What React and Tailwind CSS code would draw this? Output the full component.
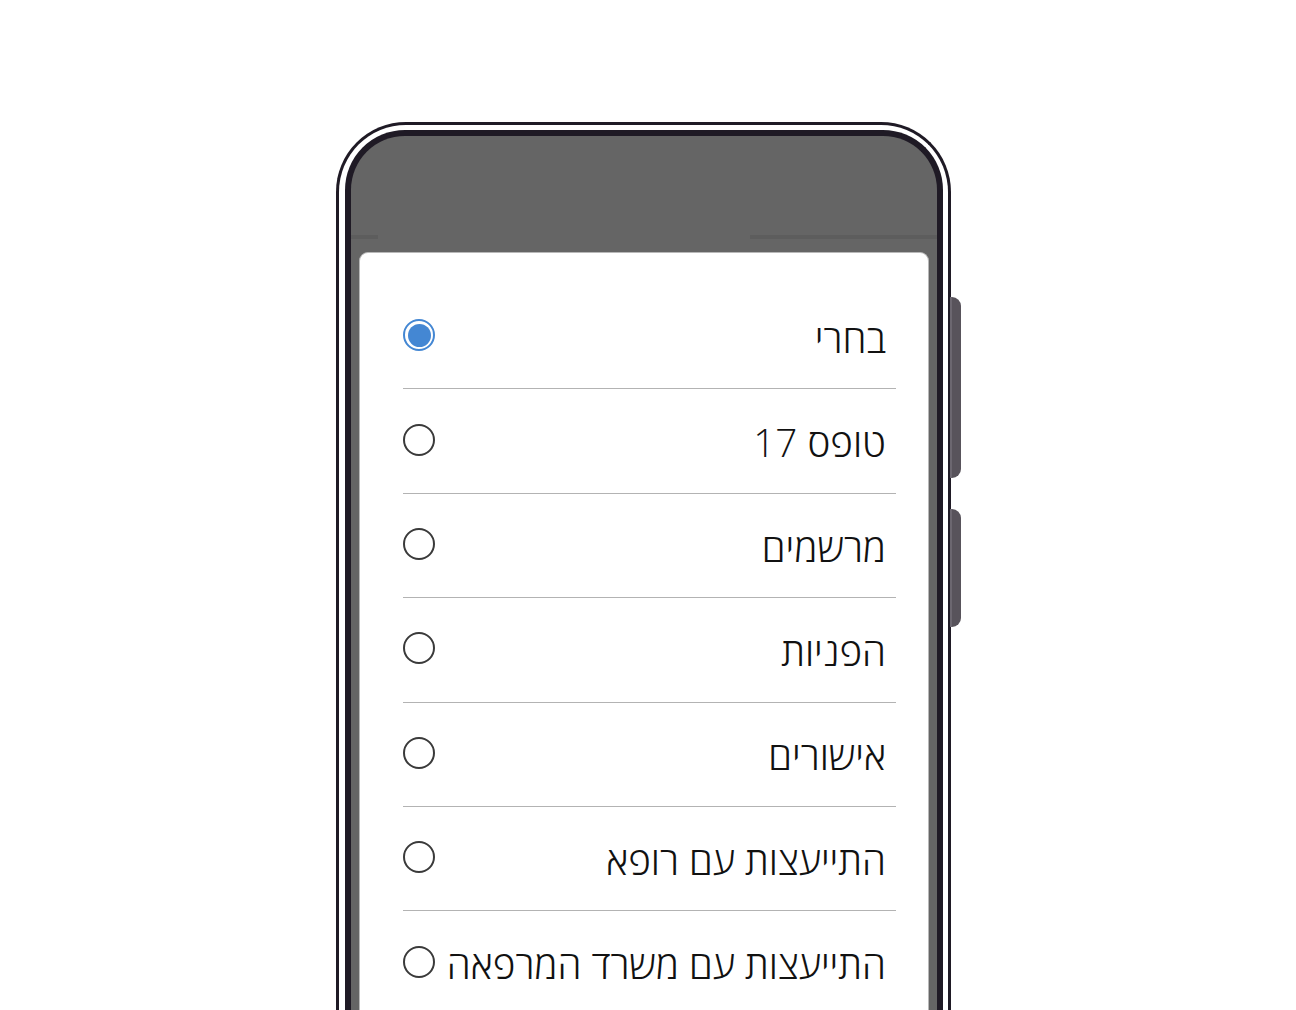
import React, { useState } from "react";

const options = [
  "בחרי",
  "טופס 17",
  "מרשמים",
  "הפניות",
  "אישורים",
  "התייעצות עם רופא",
  "התייעצות עם משרד המרפאה",
];

const Radio = ({ checked }) => {
  if (checked) {
    return (
      <span className="w-[32px] h-[32px] mb-[3px] rounded-full border-2 border-[#4487d3] flex items-center justify-center shrink-0">
        <span className="w-[23px] h-[23px] rounded-full bg-[#4487d3]" />
      </span>
    );
  }
  return (
    <span className="w-[32px] h-[32px] mb-[3px] rounded-full border-2 border-[#3a3a3a] shrink-0" />
  );
};

const App = () => {
  const [selected, setSelected] = useState(0);

  return (
    <div className="h-[1010px] w-full overflow-hidden bg-white pl-[336px] pt-[122px]">
      {/* phone body */}
      <div className="relative w-[615px] h-[1000px] rounded-t-[70px] border-[3px] border-b-0 border-[#1f1a25] bg-white pl-[6px] pr-[5px] pt-[5px]">
        {/* side buttons */}
        <div className="absolute left-[611px] top-[172px] w-[11px] h-[181px] rounded-r-[9px] bg-[#58535b] border-l-2 border-[#6c6770]" />
        <div className="absolute left-[611px] top-[384px] w-[11px] h-[118px] rounded-r-[9px] bg-[#58535b] border-l-2 border-[#6c6770]" />

        <div className="h-full rounded-t-[60px] border-[6px] border-b-0 border-[#1f1a25] bg-[#656565] pt-[99px] overflow-hidden">
          {/* status bar shade */}
          <div className="flex h-[4px]">
            <div className="w-[27px] bg-[#5d5d5d]" />
            <div className="flex-1" />
            <div className="w-[187px] bg-[#5d5d5d]" />
          </div>

          <div className="px-[8px] pt-[13px] h-full">
            <div
              dir="rtl"
              className="h-full bg-white rounded-t-[9px] border border-b-0 border-[#b8b8b8] pr-[32px] pl-[43px] pt-[32px]"
              style={{ fontFamily: '"Open Sans", "DejaVu Sans", sans-serif' }}
            >
              {options.map((label, i) => (
                <div
                  key={label}
                  onClick={() => setSelected(i)}
                  className="flex items-center h-[104.4px] border-b border-[#b3b3b3] cursor-pointer"
                >
                  <span className="flex-1 pr-[10px] text-[38.6px] font-light leading-none text-[#111] pt-[3px]">
                    {label}
                  </span>
                  <Radio checked={selected === i} />
                </div>
              ))}
            </div>
          </div>
        </div>
      </div>
    </div>
  );
};

export default App;
